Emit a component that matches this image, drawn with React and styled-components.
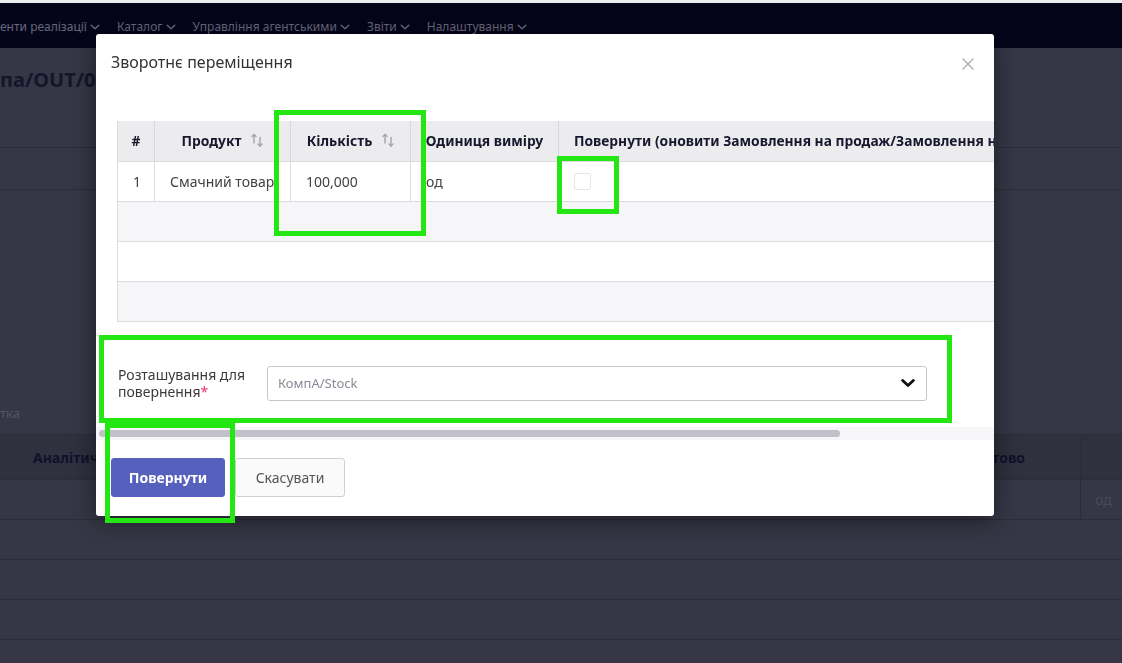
import React from "react";
import styled, { createGlobalStyle } from "styled-components";

const Global = createGlobalStyle`
  html, body { margin: 0; padding: 0; }
  body {
    width: 1122px; height: 663px; overflow: hidden;
    background: #363646;
    font-family: "Noto Sans", "Open Sans", sans-serif;
  }
  * { box-sizing: border-box; }
`;

/* ---------- background page (under the backdrop) ---------- */
const Page = styled.div`
  width: 1122px; height: 663px; overflow: hidden;
  display: flex; flex-direction: column;
  background: #363646;
  & > * { flex-shrink: 0; }
`;
const TopStrip = styled.div`height: 3px; background: #ededf0;`;
const NavBar = styled.nav`
  height: 45px; background: #05051a;
  display: flex; align-items: center; gap: 17px; padding-top: 2px;
  color: #67677b; font-size: 12px; white-space: nowrap;
`;
const NavItem = styled.span`
  display: inline-flex; align-items: center; gap: 3px;
`;
const PageHead = styled.div`
  height: 100px; border-bottom: 1px solid #2c2c3a;
  display: flex; align-items: center; padding-bottom: 36px;
  font-size: 20px; font-weight: 700; color: #15152a;
`;
const TabsBand = styled.div`height: 42px; border-bottom: 1px solid #2c2c3a;`;
const SmallLabel = styled.div`
  height: 245px; display: flex; align-items: flex-end; padding-bottom: 12px;
  font-size: 13px; color: #55556a; border-bottom: 1px solid #2c2c3a;
`;
const BgRow = styled.div`
  display: flex; height: ${p => p.$h || 40}px;
  background: ${p => p.$head ? "#30303e" : "transparent"};
  border-bottom: 1px solid #2c2c3a;
  font-size: 14px; font-weight: 700; color: #10102a;
`;
const BgCell = styled.div`
  display: flex; align-items: center;
  width: ${p => p.$w}px; padding-left: ${p => p.$pl || 0}px;
  border-right: ${p => p.$div ? "1px solid #2c2c3a" : "none"};
  color: ${p => p.$muted ? "#4a4a5c" : "inherit"};
  font-weight: ${p => p.$muted ? 400 : 700};
`;
const Spacer = styled.span`
  flex: ${p => p.$w ? "none" : 1}; width: ${p => p.$w || 0}px;
`;

/* ---------- modal ---------- */
const Dialog = styled.div`
  position: fixed; left: 96px; top: 34px; width: 898px;
  background: #fff; border-radius: 3px;
  box-shadow: 0 5px 25px rgba(0, 0, 0, 0.45);
  overflow: hidden;
`;
const DialogHeader = styled.div`
  display: flex; justify-content: space-between; align-items: center;
  padding: 18px 20px 0 15px; height: 38px;
`;
const Title = styled.h4`
  margin: 0; font-size: 16px; font-weight: 400; color: #333; line-height: 20px;
`;
const Close = styled.button`
  border: 0; background: none; padding: 0; margin-top: 4px;
  width: 12px; height: 12px; display: flex; cursor: pointer;
`;
const ScrollArea = styled.div`
  margin-top: 49px; overflow: hidden; padding-left: 21px;
`;
const Table = styled.table`
  border-collapse: collapse; table-layout: fixed; width: 1150px;
  border-left: 1px solid #dcdce0;
`;
const Th = styled.th`
  height: 40px; background: #ececef; padding: 0 ${p => p.$left ? "15px" : "2px"};
  border-right: 1px solid #d8d8dc; border-bottom: 1px solid #dcdce0;
  font-size: 13.8px; font-weight: 700; color: #17172e; white-space: nowrap;
  text-align: ${p => p.$left ? "left" : "center"};
`;
const ThInner = styled.span`
  display: inline-flex; align-items: center; gap: 10px;
`;
const Td = styled.td`
  height: 40px; padding: 0 15px; white-space: nowrap;
  text-align: ${p => p.$center ? "center" : "left"};
  border-right: 1px solid #dcdce0; border-bottom: 1px solid #dcdce0;
  font-size: 14px; color: #454045;
`;
const FillerRow = styled.tr`
  background: ${p => p.$alt ? "#f6f6f8" : "#fff"};
`;
const FillerCell = styled.td`
  height: 40px; border-bottom: 1px solid #dcdce0;
`;
const Check = styled.span`
  display: block; width: 17px; height: 17px;
  border: 1px solid #e6e6ea; border-radius: 2px; background: #fff;
`;
const FormRow = styled.div`
  display: flex; align-items: center; width: 810px;
  margin-top: 44px; padding-left: 1px;
`;
const Label = styled.label`
  width: 149px; font-size: 14px; line-height: 17px; color: #3f3a3a;
`;
const Req = styled.span`color: #e8336a;`;
const Select = styled.div`
  flex: 1; height: 35px; border: 1px solid #c6c6ce; border-radius: 3px;
  display: flex; align-items: center; justify-content: space-between;
  padding: 0 11px 0 10px; font-size: 13px; color: #8a8a96;
`;
const Track = styled.div`
  margin-top: 26px; height: 13px; background: #f6f6f8;
  display: flex; align-items: center; padding-left: 3px;
`;
const Thumb = styled.div`
  width: 741px; height: 7px; border-radius: 4px; background: #c1c1ca;
`;
const Footer = styled.div`
  display: flex; gap: 10px; padding: 18px 15px 19px;
`;
const Button = styled.button`
  height: 39px; width: ${p => p.$w}px; border-radius: 3px;
  font-family: inherit; font-size: 14px; cursor: pointer;
  font-weight: ${p => p.$primary ? 700 : 400};
  color: ${p => p.$primary ? "#fff" : "#555"};
  background: ${p => p.$primary ? "#5561bd" : "#fafafa"};
  border: 1px solid ${p => p.$primary ? "#5561bd" : "#cfcfd4"};
`;

/* ---------- annotation boxes ---------- */
const Mark = styled.div`
  position: fixed; left: ${p => p.$x}px; top: ${p => p.$y}px;
  width: ${p => p.$w}px; height: ${p => p.$h}px;
  border: 5px solid #24e612; pointer-events: none;
`;

const Chevron = ({ color = "#67677b", size = 10, sw = 1.5 }) => (
  <svg width={size} height={size} viewBox="0 0 10 10" fill="none">
    <path d="M1.2 3.2 L5 6.8 L8.8 3.2" stroke={color} strokeWidth={sw} strokeLinecap="round" strokeLinejoin="round" />
  </svg>
);

const SortIcon = () => (
  <svg width="12" height="15" viewBox="0 0 12 15" fill="none" stroke="#a4a4ac" strokeWidth="1.4" strokeLinecap="round" strokeLinejoin="round">
    <path d="M3 1.5 V10" />
    <path d="M1 3.5 L3 1.5 L5 3.5" />
    <path d="M9 4.5 V13" />
    <path d="M7 11 L9 13 L11 11" />
  </svg>
);

const CloseIcon = () => (
  <svg width="12" height="12" viewBox="0 0 12 12" stroke="#b4b4b8" strokeWidth="1.5" strokeLinecap="round">
    <path d="M1 1 L11 11 M11 1 L1 11" />
  </svg>
);

const nav = ["енти реалізації", "Каталог", "Управління агентськими", "Звіти", "Налаштування"];

export default function App() {
  return (
    <>
      <Global />
      <Page>
        <TopStrip />
        <NavBar>
          {nav.map(n => (
            <NavItem key={n}>{n}<Chevron /></NavItem>
          ))}
        </NavBar>
        <PageHead>па/OUT/00001</PageHead>
        <TabsBand />
        <SmallLabel>тка</SmallLabel>
        <BgRow $head $h={45}>
          <BgCell $w={1081} $pl={33} $div>Аналітична Групування<Spacer />Готово<Spacer $w={55} /></BgCell>
          <BgCell $w={41} />
        </BgRow>
        <BgRow>
          <BgCell $w={1081} $div />
          <BgCell $w={41} $pl={14} $muted>од</BgCell>
        </BgRow>
        <BgRow />
        <BgRow />
        <BgRow />
        <BgRow />
      </Page>

      <Dialog role="dialog">
        <DialogHeader>
          <Title>Зворотнє переміщення</Title>
          <Close aria-label="close"><CloseIcon /></Close>
        </DialogHeader>
        <ScrollArea>
          <Table>
            <colgroup>
              <col style={{ width: 37 }} />
              <col style={{ width: 136 }} />
              <col style={{ width: 120 }} />
              <col style={{ width: 148 }} />
              <col style={{ width: 709 }} />
            </colgroup>
            <thead>
              <tr>
                <Th>#</Th>
                <Th><ThInner>Продукт <SortIcon /></ThInner></Th>
                <Th><ThInner>Кількість <SortIcon /></ThInner></Th>
                <Th>Одиниця виміру</Th>
                <Th $left>Повернути (оновити Замовлення на продаж/Замовлення на купівлю)</Th>
              </tr>
            </thead>
            <tbody>
              <tr>
                <Td $center>1</Td>
                <Td>Смачний товар</Td>
                <Td>100,000</Td>
                <Td>од</Td>
                <Td><Check /></Td>
              </tr>
              <FillerRow $alt><FillerCell colSpan={5} /></FillerRow>
              <FillerRow><FillerCell colSpan={5} /></FillerRow>
              <FillerRow $alt><FillerCell colSpan={5} /></FillerRow>
            </tbody>
          </Table>
          <FormRow>
            <Label>Розташування для повернення<Req>*</Req></Label>
            <Select>
              КомпА/Stock
              <Chevron color="#111" size={14} sw={2} />
            </Select>
          </FormRow>
        </ScrollArea>
        <Track><Thumb /></Track>
        <Footer>
          <Button $primary $w={114}>Повернути</Button>
          <Button $w={110}>Скасувати</Button>
        </Footer>
      </Dialog>

      <Mark $x={274} $y={110} $w={152} $h={126} />
      <Mark $x={557} $y={156} $w={62} $h={58} />
      <Mark $x={99} $y={335} $w={853} $h={88} />
      <Mark $x={105} $y={423} $w={130} $h={100} />
    </>
  );
}
